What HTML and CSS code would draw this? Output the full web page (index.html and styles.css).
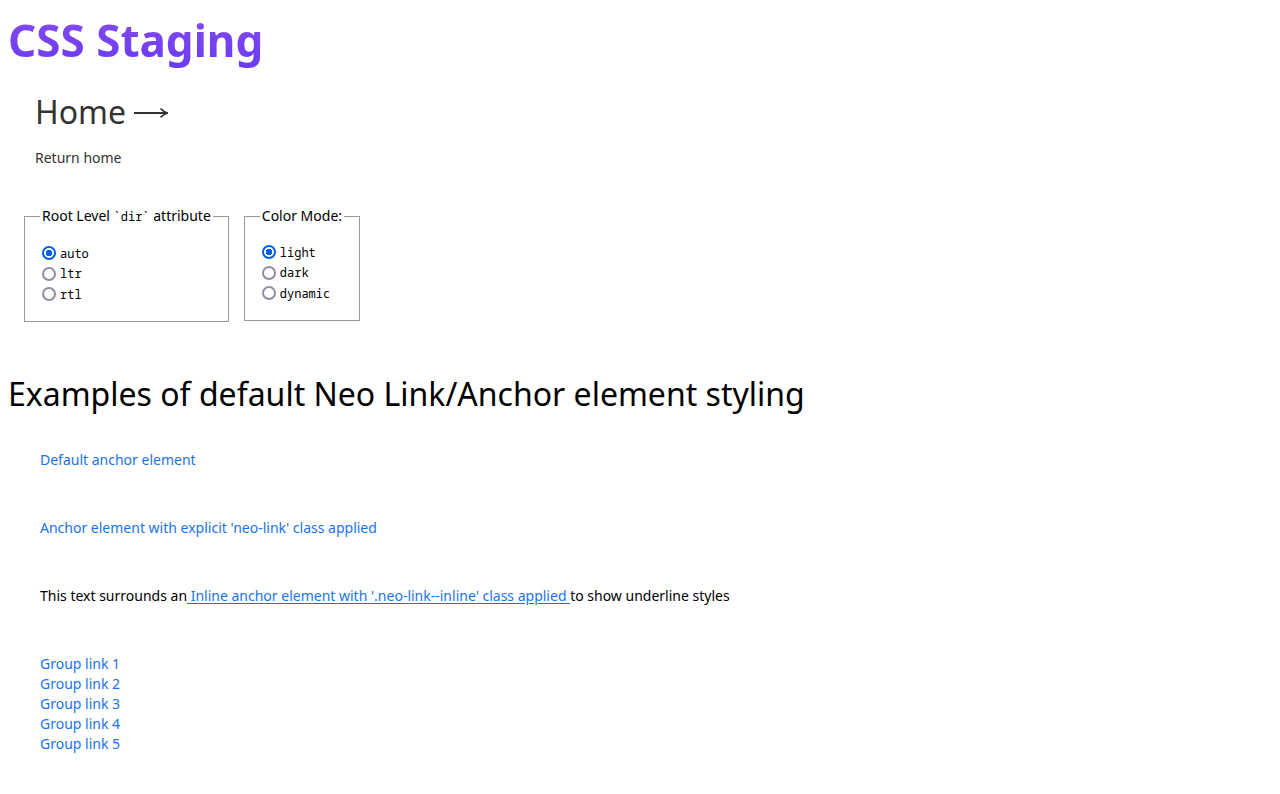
FILE: index.html
```html
<!DOCTYPE html>
<html lang="en">
<head>
<meta charset="utf-8">
<title>CSS Staging</title>
<link rel="stylesheet" href="styles.css">
</head>
<body>
<header class="site-header">
  <h1 class="site-title">CSS Staging</h1>
  <nav class="home-nav">
    <h2 class="home-title">Home<svg class="arrow" width="34" height="14" viewBox="0 0 34 14" aria-hidden="true"><path d="M0 7H32.5" stroke="#333" stroke-width="1.8" fill="none"/><path d="M26.5 2.6 Q30 6 33.6 7 Q30 8 26.5 11.4" stroke="#333" stroke-width="1.6" fill="none" stroke-linejoin="round"/></svg></h2>
    <p class="home-sub">Return home</p>
  </nav>
</header>
<form class="controls">
  <fieldset class="control-set">
    <legend>Root Level <code>`dir`</code> attribute</legend>
    <label class="opt"><input type="radio" name="dir" checked><code>auto</code></label>
    <label class="opt"><input type="radio" name="dir"><code>ltr</code></label>
    <label class="opt"><input type="radio" name="dir"><code>rtl</code></label>
  </fieldset>
  <fieldset class="control-set">
    <legend>Color Mode:</legend>
    <label class="opt"><input type="radio" name="mode" checked><code>light</code></label>
    <label class="opt"><input type="radio" name="mode"><code>dark</code></label>
    <label class="opt"><input type="radio" name="mode"><code>dynamic</code></label>
  </fieldset>
</form>
<main class="examples">
  <h2 class="examples-title">Examples of default Neo Link/Anchor element styling</h2>
  <div class="example"><a href="#">Default anchor element</a></div>
  <div class="example"><a href="#" class="neo-link">Anchor element with explicit 'neo-link' class applied</a></div>
  <div class="example"><p class="inline-text">This text surrounds an<a href="#" class="neo-link neo-link--inline"> Inline anchor element with '.neo-link--inline' class applied </a>to show underline styles</p></div>
  <div class="example group">
    <a href="#">Group link 1</a>
    <a href="#">Group link 2</a>
    <a href="#">Group link 3</a>
    <a href="#">Group link 4</a>
    <a href="#">Group link 5</a>
  </div>
</main>
</body>
</html>
```
FILE: styles.css
```css
html, body {
  background: #fff;
}
body {
  margin: 8px;
  font-family: "Noto Sans", sans-serif;
  color: #000;
}
.site-title {
  margin: 0;
  font-size: 44px;
  font-weight: 700;
  line-height: 64px;
  background: linear-gradient(180deg, #8249ec 20%, #6a3cf4 90%);
  -webkit-background-clip: text;
  background-clip: text;
  color: transparent;
  display: inline-block;
  vertical-align: top;
}
.home-nav {
  padding: 18px 27px 0;
}
.home-title {
  margin: 0;
  font-size: 32px;
  font-weight: 400;
  line-height: 44px;
  color: #333;
  display: flex;
  align-items: center;
}
.arrow {
  margin-left: 8px;
  margin-top: 2px;
  flex: none;
}
.home-sub {
  margin: 14px 0 0;
  font-size: 14px;
  line-height: 20px;
  color: #333;
}
.controls {
  display: flex;
  align-items: flex-start;
  gap: 15px;
  padding: 38px 16px 0;
}
.control-set {
  margin: 0;
  border: 1px solid #999;
  padding: 16px 15px 16px;
  display: flex;
  flex-direction: column;
}
.control-set legend {
  font-size: 14px;
  line-height: 20px;
  padding: 0 2px;
  margin-left: 0;
}
.control-set legend code {
  font-family: "Noto Sans Mono", "DejaVu Sans Mono", monospace;
  font-size: 12px;
}
.opt {
  display: flex;
  align-items: center;
  height: 20.5px;
  gap: 4px;
  padding-left: 2px;
}
.opt input {
  appearance: none;
  -webkit-appearance: none;
  margin: 0;
  width: 14px;
  height: 14px;
  border: 2px solid #8f8f9d;
  border-radius: 50%;
  background: #fff;
  box-sizing: border-box;
}
.opt input:checked {
  border-color: #0060df;
  background: radial-gradient(circle, #0060df 0 3px, #fff 3.5px);
}
.opt code {
  font-family: "Noto Sans Mono", "DejaVu Sans Mono", monospace;
  font-size: 12px;
}
.examples {
  font-size: 14px;
}
.examples-title {
  margin: 50px 0 0;
  font-size: 32px;
  font-weight: 400;
  line-height: 44px;
}
.example {
  padding: 0 32px;
  margin-top: 48px;
  line-height: 20px;
}
.examples-title + .example { margin-top: 34px; }
.example a {
  color: #1a73e8;
  text-decoration: none;
}
.inline-text { margin: 0; }
.example a.neo-link--inline {
  text-decoration: underline;
  text-underline-offset: 2px;
}
.group {
  display: flex;
  flex-direction: column;
  align-items: flex-start;
}
```
